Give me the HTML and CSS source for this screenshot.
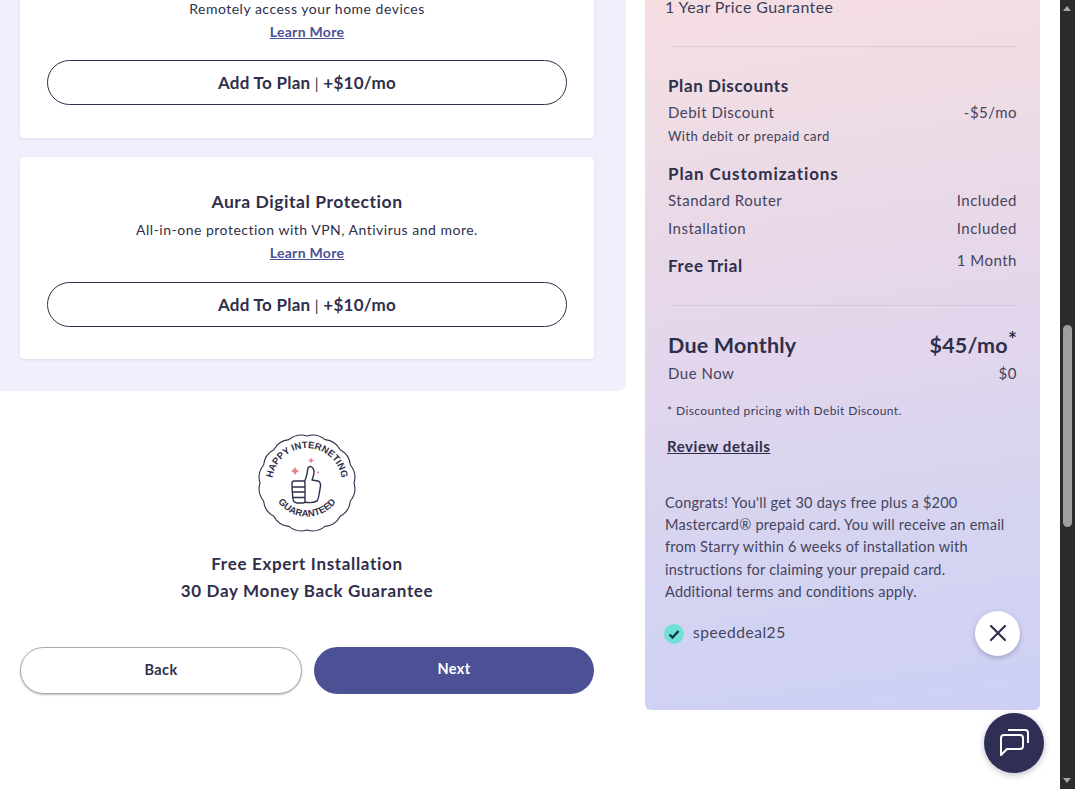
FILE: index.html
```html
<!DOCTYPE html>
<html lang="en">
<head>
<meta charset="utf-8">
<title>Plan add-ons</title>
<link rel="stylesheet" href="styles.css">
</head>
<body>
<div class="viewport">
  <div class="page">
    <main class="main">
      <section class="addons">
        <article class="card card-first">
          <p class="card-desc">Remotely access your home devices</p>
          <a class="learn" href="#">Learn More</a>
          <button class="add-btn">Add To Plan <span class="sep">|</span> +$10/mo</button>
        </article>
        <article class="card card-second">
          <h3 class="card-title">Aura Digital Protection</h3>
          <p class="card-desc">All-in-one protection with VPN, Antivirus and more.</p>
          <a class="learn" href="#">Learn More</a>
          <button class="add-btn">Add To Plan <span class="sep">|</span> +$10/mo</button>
        </article>
      </section>
      <div class="guarantee">
        <svg class="badge" viewBox="0 0 100 100" role="img" aria-label="Happy Internet Guaranteed badge">
          <path class="badge-edge" d="M97 50Q100 59.900 93.400 68Q92.400 78.400 83.200 83.200Q78.400 92.400 68 93.400Q59.900 100 50 97Q40.100 100 32 93.400Q21.600 92.400 16.800 83.200Q7.600 78.400 6.600 68Q0 59.900 3 50Q0 40.100 6.600 32Q7.600 21.600 16.800 16.800Q21.600 7.600 32 6.600Q40.100 0 50 3Q59.900 0 68 6.600Q78.400 7.600 83.200 16.800Q92.400 21.600 93.400 32Q100 40.100 97 50Z"/>
          <defs>
            <path id="arc-top" d="M15.500 56A35 35 0 1 1 84.500 56"/>
            <path id="arc-bottom" d="M17 62A36 36 0 0 0 83 62"/>
          </defs>
          <text class="badge-text"><textPath href="#arc-top" startOffset="50%" text-anchor="middle">HAPPY INTERNETING</textPath></text>
          <text class="badge-text"><textPath href="#arc-bottom" startOffset="50%" text-anchor="middle">GUARANTEED</textPath></text>
          <path class="spark" d="M38 34l1.500 2.500 2.500 1.500-2.500 1.500-1.500 2.500-1.500-2.500-2.500-1.500 2.500-1.500z"/>
          <path class="spark" d="M54 24.500l1 2 2 1-2 1-1 2-1-2-2-1 2-1z"/>
          <circle class="spark" cx="61" cy="39.500" r="1"/>
          <path class="thumb" d="M47 49C50 45 50 39 51 35C53 32 57 34 57 39C57 42 56 44 55 47L61 48C64 49 64 52 63 56C62 61 62 65 60 68C56 70 52 70 47 69"/>
          <path class="thumb" d="M37 48H46Q48 48 48 50V68Q48 70 46 70H40Q36 69 36 66Q35 57 35 51Q35 48 37 48ZM35.500 54H48M35.500 59H48M36 64.500H48"/>
        </svg>
        <p class="guarantee-line">Free Expert Installation</p>
        <p class="guarantee-line">30 Day Money Back Guarantee</p>
      </div>
      <div class="nav-buttons">
        <button class="nav-btn nav-back">Back</button>
        <button class="nav-btn nav-next">Next</button>
      </div>
    </main>

    <aside class="summary">
      <p class="guarantee-note">1 Year Price Guarantee</p>
      <hr class="rule rule-first">
      <h4 class="sum-head">Plan Discounts</h4>
      <div class="row"><span>Debit Discount</span><span>-$5/mo</span></div>
      <p class="small">With debit or prepaid card</p>
      <h4 class="sum-head sum-head-custom">Plan Customizations</h4>
      <div class="row"><span>Standard Router</span><span>Included</span></div>
      <div class="row row-install"><span>Installation</span><span>Included</span></div>
      <div class="row row-trial"><span class="sum-head">Free Trial</span><span class="trial-val">1 Month</span></div>
      <hr class="rule rule-second">
      <div class="row row-due"><span>Due Monthly</span><span>$45/mo<sup class="star">*</sup></span></div>
      <div class="row"><span>Due Now</span><span>$0</span></div>
      <p class="small footnote">* Discounted pricing with Debit Discount.</p>
      <a class="review" href="#">Review details</a>
      <p class="promo-text">Congrats! You'll get 30 days free plus a $200 Mastercard® prepaid card. You will receive an email from Starry within 6 weeks of installation with instructions for claiming your prepaid card. Additional terms and conditions apply.</p>
      <div class="promo-code">
        <span class="tick"><svg viewBox="0 0 20 20" width="20" height="20"><path d="M5.500 10.500l3 3 6-6.500" fill="none" stroke="#123a44" stroke-width="2.400"/></svg></span>
        <span class="code-name">speeddeal25</span>
        <button class="close-btn" aria-label="Remove"><svg viewBox="0 0 20 20" width="20" height="20"><path d="M3 3L17 17M17 3L3 17" stroke="#2f2f4f" stroke-width="2.200" stroke-linecap="round"/></svg></button>
      </div>
    </aside>

    <div class="scrollbar">
      <span class="arrow arrow-up"></span>
      <span class="thumb-bar"></span>
      <span class="arrow arrow-down"></span>
    </div>
  </div>
  <button class="chat" aria-label="Chat">
    <svg viewBox="0 0 32 32" width="32" height="32" fill="none" stroke="#fff" stroke-width="2">
      <path d="M3 11Q3 8 6 8H22Q25 8 25 11V19Q25 22 22 22H9L3 28Z" stroke-linejoin="round"/>
      <path d="M10 3H27Q30 3 30 6V16"/>
    </svg>
  </button>
</div>
</body>
</html>
```
FILE: styles.css
```css
* { box-sizing: border-box; }
html, body { margin: 0; height: 100%; overflow: hidden; background: #fff; }
body { font-family: "Lato", "Open Sans", sans-serif; color: #2f2f4b; }
p, h3, h4 { margin: 0; }

.viewport { position: relative; width: 1075px; height: 789px; overflow: hidden; }
.page { display: flex; align-items: flex-start; height: 789px; }

/* left column */
.main { width: 626px; flex: none; margin-top: -22px; }
.addons { display: flex; flex-direction: column; gap: 19px; padding: 0 32px 32px 20px; background: #f0f0fc; border-bottom-right-radius: 8px; }
.card { display: flex; flex-direction: column; align-items: center; background: #fff; border-radius: 4px; padding: 0 27px 32px; box-shadow: 0 1px 3px rgba(70, 70, 130, .12); }
.card-first { padding-top: 20px; padding-bottom: 33px; }
.card-second { padding-top: 33px; }
.card-title { font-size: 17.500px; line-height: 24px; font-weight: 700; letter-spacing: .55px; margin-bottom: 5px; }
.card-desc { font-size: 14px; line-height: 22px; letter-spacing: .5px; }
.learn { font-size: 14px; line-height: 24px; font-weight: 700; color: #4c5196; letter-spacing: .3px; }
.add-btn { width: 520px; height: 45px; margin-top: 16px; padding-bottom: 2px; background: #fff; border: 1px solid #2f2f4b; border-radius: 23px; font: 700 17px "Lato", sans-serif; letter-spacing: .27px; color: #2f2f4b; }
.card-second .add-btn { margin-top: 17px; }
.sep { font-weight: 400; font-size: 15px; }

.guarantee { display: flex; flex-direction: column; align-items: center; padding: 42px 32px 0 20px; }
.badge { width: 100px; height: 100px; margin-bottom: 17px; overflow: visible; }
.badge-edge { fill: #fff; stroke: #2f2f4b; stroke-width: 1.100; }
.badge-text { font: 700 9.500px "Liberation Sans", sans-serif; letter-spacing: 0; fill: #2f2f4b; }
.spark { fill: #ea7f8e; }
.thumb { fill: #fff; stroke: #2f2f4b; stroke-width: 1.400; stroke-linejoin: round; }
.guarantee-line { font-size: 17px; line-height: 27px; font-weight: 700; letter-spacing: .67px; }

.nav-buttons { display: flex; gap: 12px; padding: 43px 32px 0 20px; }
.nav-btn { flex: 1 1 0; height: 47px; border-radius: 24px; font: 700 14.500px "Lato", sans-serif; letter-spacing: .4px; }
.nav-back { background: #fff; color: #2f2f4b; border: 1px solid #aaa; box-shadow: 0 1px 2px rgba(0, 0, 0, .25); padding-bottom: 3px; }
.nav-next { background: #4c5196; color: #fff; border: 0; padding-bottom: 5px; }

/* order summary */
.summary { width: 395px; flex: none; margin: -20px 0 0 19px; height: 730px; padding: 15px 23px 0 20px; border-radius: 0 0 6px 6px; background: linear-gradient(172deg, #f7dfe2 0%, #ecdbe6 25%, #e3d6ec 50%, #d6d4f0 72%, #cdd0f5 100%); font-size: 15px; }
.guarantee-note { font-size: 16px; line-height: 24px; letter-spacing: .4px; color: #3d3d58; }
.rule { border: 0; border-top: 1px solid rgba(90, 80, 130, .13); margin: 0 0 0 6px; }
.rule-first { margin-top: 27px; margin-bottom: 27px; }
.rule-second { margin-top: 27px; margin-bottom: 24px; }
.sum-head { font-size: 17px; line-height: 24px; font-weight: 700; letter-spacing: .6px; margin-left: 3px; }
.row { display: flex; justify-content: space-between; line-height: 28px; margin-left: 3px; letter-spacing: .5px; color: #44445e; }
.row .sum-head { margin-left: 0; color: #2f2f4b; }
.small { font-size: 13px; line-height: 20px; margin-left: 3px; letter-spacing: .45px; color: #3d3d58; }
.sum-head-custom { margin-top: 16px; letter-spacing: .9px; }
.row-trial { align-items: flex-start; height: 36px; padding-top: 12px; line-height: 24px; }
.trial-val { margin-top: -6px; }
.row-due { font-size: 21.500px; line-height: 30px; font-weight: 700; letter-spacing: .2px; color: #2f2f4b; margin-bottom: -1px; }
.star { font-size: 21px; line-height: 0; vertical-align: 6px; }
.footnote { font-size: 12px; margin: 14px 0 0 2px; line-height: 20px; letter-spacing: .4px; }
.review { display: block; font-size: 15px; line-height: 22px; font-weight: 700; color: #2f2f4b; margin: 14px 0 0 2px; letter-spacing: .55px; }
.promo-text { max-width: 346px; font-size: 14.500px; line-height: 22.200px; margin-top: 35px; letter-spacing: .24px; color: #44445e; }
.promo-code { display: flex; align-items: center; height: 46px; margin-top: 7px; }
.tick { width: 20px; height: 20px; border-radius: 50%; background: #6fe0d6; margin: 2px 0 0 -1px; }
.tick svg { display: block; }
.code-name { margin-left: 9px; font-size: 15.500px; letter-spacing: .55px; color: #44445e; margin-top: -3px; }
.close-btn { display: flex; align-items: center; justify-content: center; width: 45px; height: 45px; margin-left: auto; margin-right: -3px; border: 0; border-radius: 50%; background: #fff; box-shadow: 0 2px 5px rgba(50, 50, 90, .3); padding: 0; }

/* window scrollbar */
.scrollbar { position: relative; width: 15px; height: 789px; margin-left: auto; background: #2b2b2b; flex: none; }
.thumb-bar { position: absolute; left: 3px; top: 325px; width: 9px; height: 202px; border-radius: 5px; background: #9f9f9f; }
.arrow { position: absolute; left: 3px; width: 0; height: 0; border-left: 4.500px solid transparent; border-right: 4.500px solid transparent; }
.arrow-up { top: 6px; border-bottom: 5px solid #a8a8a8; }
.arrow-down { bottom: 6px; border-top: 5px solid #a8a8a8; }

/* floating chat */
.chat { position: absolute; left: 984px; top: 713px; display: flex; align-items: center; justify-content: center; width: 60px; height: 60px; border: 0; padding: 0; border-radius: 50%; background: #2f2f55; box-shadow: 0 2px 6px rgba(40, 40, 80, .3); }
```
